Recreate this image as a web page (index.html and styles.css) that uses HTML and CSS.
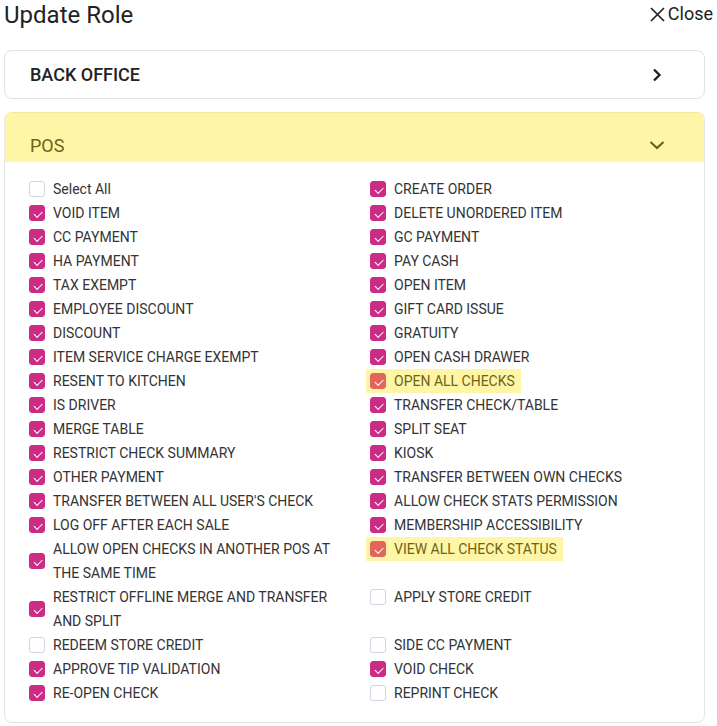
FILE: index.html
```html
<!DOCTYPE html>
<html>
<head>
<meta charset="utf-8">
<link rel="stylesheet" href="styles.css">
</head>
<body>
<div class="page">
  <div class="topbar">
    <h1 class="title">Update Role</h1>
    <button class="close">
      <svg width="15" height="15" viewBox="0 0 15 15"><path d="M1 1 L14 14 M14 1 L1 14" stroke="#222" stroke-width="1.7" fill="none"/></svg>
      <span>Close</span>
    </button>
  </div>

  <div class="card collapsed">
    <div class="card-head">
      <span class="card-title">BACK OFFICE</span>
      <svg class="chev" width="16" height="16" viewBox="0 0 16 16"><path d="M5 2.5 L10.5 8 L5 13.5" stroke="#222" stroke-width="2.4" fill="none"/></svg>
    </div>
  </div>

  <div class="card open">
    <div class="card-head pos-head">
      <span class="card-title pos-title">POS</span>
      <svg class="chev" width="16" height="16" viewBox="0 0 16 16"><path d="M1.5 5 L8 11 L14.5 5" stroke="#6b6417" stroke-width="2.2" fill="none"/></svg>
    </div>
    <div class="perm-grid">
      <label class="item"><span class="box"></span><span class="txt">Select All</span></label>
      <label class="item"><span class="box on"></span><span class="txt">CREATE ORDER</span></label>

      <label class="item"><span class="box on"></span><span class="txt">VOID ITEM</span></label>
      <label class="item"><span class="box on"></span><span class="txt">DELETE UNORDERED ITEM</span></label>

      <label class="item"><span class="box on"></span><span class="txt">CC PAYMENT</span></label>
      <label class="item"><span class="box on"></span><span class="txt">GC PAYMENT</span></label>

      <label class="item"><span class="box on"></span><span class="txt">HA PAYMENT</span></label>
      <label class="item"><span class="box on"></span><span class="txt">PAY CASH</span></label>

      <label class="item"><span class="box on"></span><span class="txt">TAX EXEMPT</span></label>
      <label class="item"><span class="box on"></span><span class="txt">OPEN ITEM</span></label>

      <label class="item"><span class="box on"></span><span class="txt">EMPLOYEE DISCOUNT</span></label>
      <label class="item"><span class="box on"></span><span class="txt">GIFT CARD ISSUE</span></label>

      <label class="item"><span class="box on"></span><span class="txt">DISCOUNT</span></label>
      <label class="item"><span class="box on"></span><span class="txt">GRATUITY</span></label>

      <label class="item"><span class="box on"></span><span class="txt">ITEM SERVICE CHARGE EXEMPT</span></label>
      <label class="item"><span class="box on"></span><span class="txt">OPEN CASH DRAWER</span></label>

      <label class="item"><span class="box on"></span><span class="txt">RESENT TO KITCHEN</span></label>
      <label class="item hl"><span class="box on"></span><span class="txt">OPEN ALL CHECKS</span></label>

      <label class="item"><span class="box on"></span><span class="txt">IS DRIVER</span></label>
      <label class="item"><span class="box on"></span><span class="txt">TRANSFER CHECK/TABLE</span></label>

      <label class="item"><span class="box on"></span><span class="txt">MERGE TABLE</span></label>
      <label class="item"><span class="box on"></span><span class="txt">SPLIT SEAT</span></label>

      <label class="item"><span class="box on"></span><span class="txt">RESTRICT CHECK SUMMARY</span></label>
      <label class="item"><span class="box on"></span><span class="txt">KIOSK</span></label>

      <label class="item"><span class="box on"></span><span class="txt">OTHER PAYMENT</span></label>
      <label class="item"><span class="box on"></span><span class="txt">TRANSFER BETWEEN OWN CHECKS</span></label>

      <label class="item"><span class="box on"></span><span class="txt">TRANSFER BETWEEN ALL USER'S CHECK</span></label>
      <label class="item"><span class="box on"></span><span class="txt">ALLOW CHECK STATS PERMISSION</span></label>

      <label class="item"><span class="box on"></span><span class="txt">LOG OFF AFTER EACH SALE</span></label>
      <label class="item"><span class="box on"></span><span class="txt">MEMBERSHIP ACCESSIBILITY</span></label>

      <label class="item"><span class="box on"></span><span class="txt">ALLOW OPEN CHECKS IN ANOTHER POS AT THE SAME TIME</span></label>
      <label class="item hl"><span class="box on"></span><span class="txt">VIEW ALL CHECK STATUS</span></label>

      <label class="item"><span class="box on"></span><span class="txt">RESTRICT OFFLINE MERGE AND TRANSFER AND SPLIT</span></label>
      <label class="item"><span class="box"></span><span class="txt">APPLY STORE CREDIT</span></label>

      <label class="item"><span class="box"></span><span class="txt">REDEEM STORE CREDIT</span></label>
      <label class="item"><span class="box"></span><span class="txt">SIDE CC PAYMENT</span></label>

      <label class="item"><span class="box on"></span><span class="txt">APPROVE TIP VALIDATION</span></label>
      <label class="item"><span class="box on"></span><span class="txt">VOID CHECK</span></label>

      <label class="item"><span class="box on"></span><span class="txt">RE-OPEN CHECK</span></label>
      <label class="item"><span class="box"></span><span class="txt">REPRINT CHECK</span></label>
    </div>
  </div>
</div>
</body>
</html>
```
FILE: styles.css
```css
* { box-sizing: border-box; }
html, body { margin: 0; padding: 0; background: #fff; }
body {
  font-family: Roboto, "Liberation Sans", Arial, sans-serif;
  color: #2b2b2b;
}
.page {
  padding: 0 4px 0 4px;
}
.topbar {
  display: flex;
  align-items: flex-start;
  justify-content: space-between;
  height: 50px;
}
.title {
  margin: 1px 0 0 0;
  font-size: 24px;
  line-height: 28px;
  font-weight: 400;
  color: #222;
}
.close {
  display: flex;
  align-items: center;
  gap: 3px;
  margin-top: 1px;
  padding: 0;
  border: 0;
  background: none;
  font-family: inherit;
  font-size: 18px;
  line-height: 26px;
  color: #222;
}
.card {
  margin-right: 8px;
  border: 1px solid #e2e2e2;
  border-radius: 8px;
  overflow: hidden;
}
.card + .card { margin-top: 13px; }
.card-head {
  display: flex;
  align-items: center;
  justify-content: space-between;
  height: 47px;
  padding: 0 39px 0 25px;
}
.card-title {
  font-size: 18px;
  font-weight: 500;
  color: #222;
}
.card.open { border-color: #f3ea9c #e6e6e6 #e2e2e2 #e6e6e6; }
.pos-head {
  background: #fff5a6;
  height: 49px;
  padding-top: 15px;
  padding-right: 39px;
}
.pos-title {
  font-weight: 400;
  color: #6b6417;
}
.perm-grid {
  display: grid;
  grid-template-columns: 341px 1fr;
  align-items: start;
  padding: 15px 0 17px 20px;
}
.item {
  justify-self: start;
  max-width: 316px;
  display: flex;
  align-items: center;
  gap: 8px;
  padding: 0 6px 0 4px;
  font-size: 14px;
  line-height: 24px;
  color: #333;
}
.box {
  flex: none;
  width: 16px;
  height: 16px;
  border: 1px solid #cfd6df;
  border-radius: 3px;
  background: #fff;
  position: relative;
}
.box.on {
  background: #cc2b86;
  border-color: #cc2b86;
}
.box.on::after {
  content: "";
  position: absolute;
  left: 4px;
  top: 2px;
  width: 7px;
  height: 3.5px;
  border-left: 1.5px solid #fff;
  border-bottom: 1.5px solid #fff;
  transform: translate(0, 3px) rotate(-45deg);
}
.item.hl {
  background: #fff5a6;
  color: #6b6417;
}
.item.hl .box.on {
  background: #e2665b;
  border-color: #e2665b;
}
.txt { display: block; }
```
